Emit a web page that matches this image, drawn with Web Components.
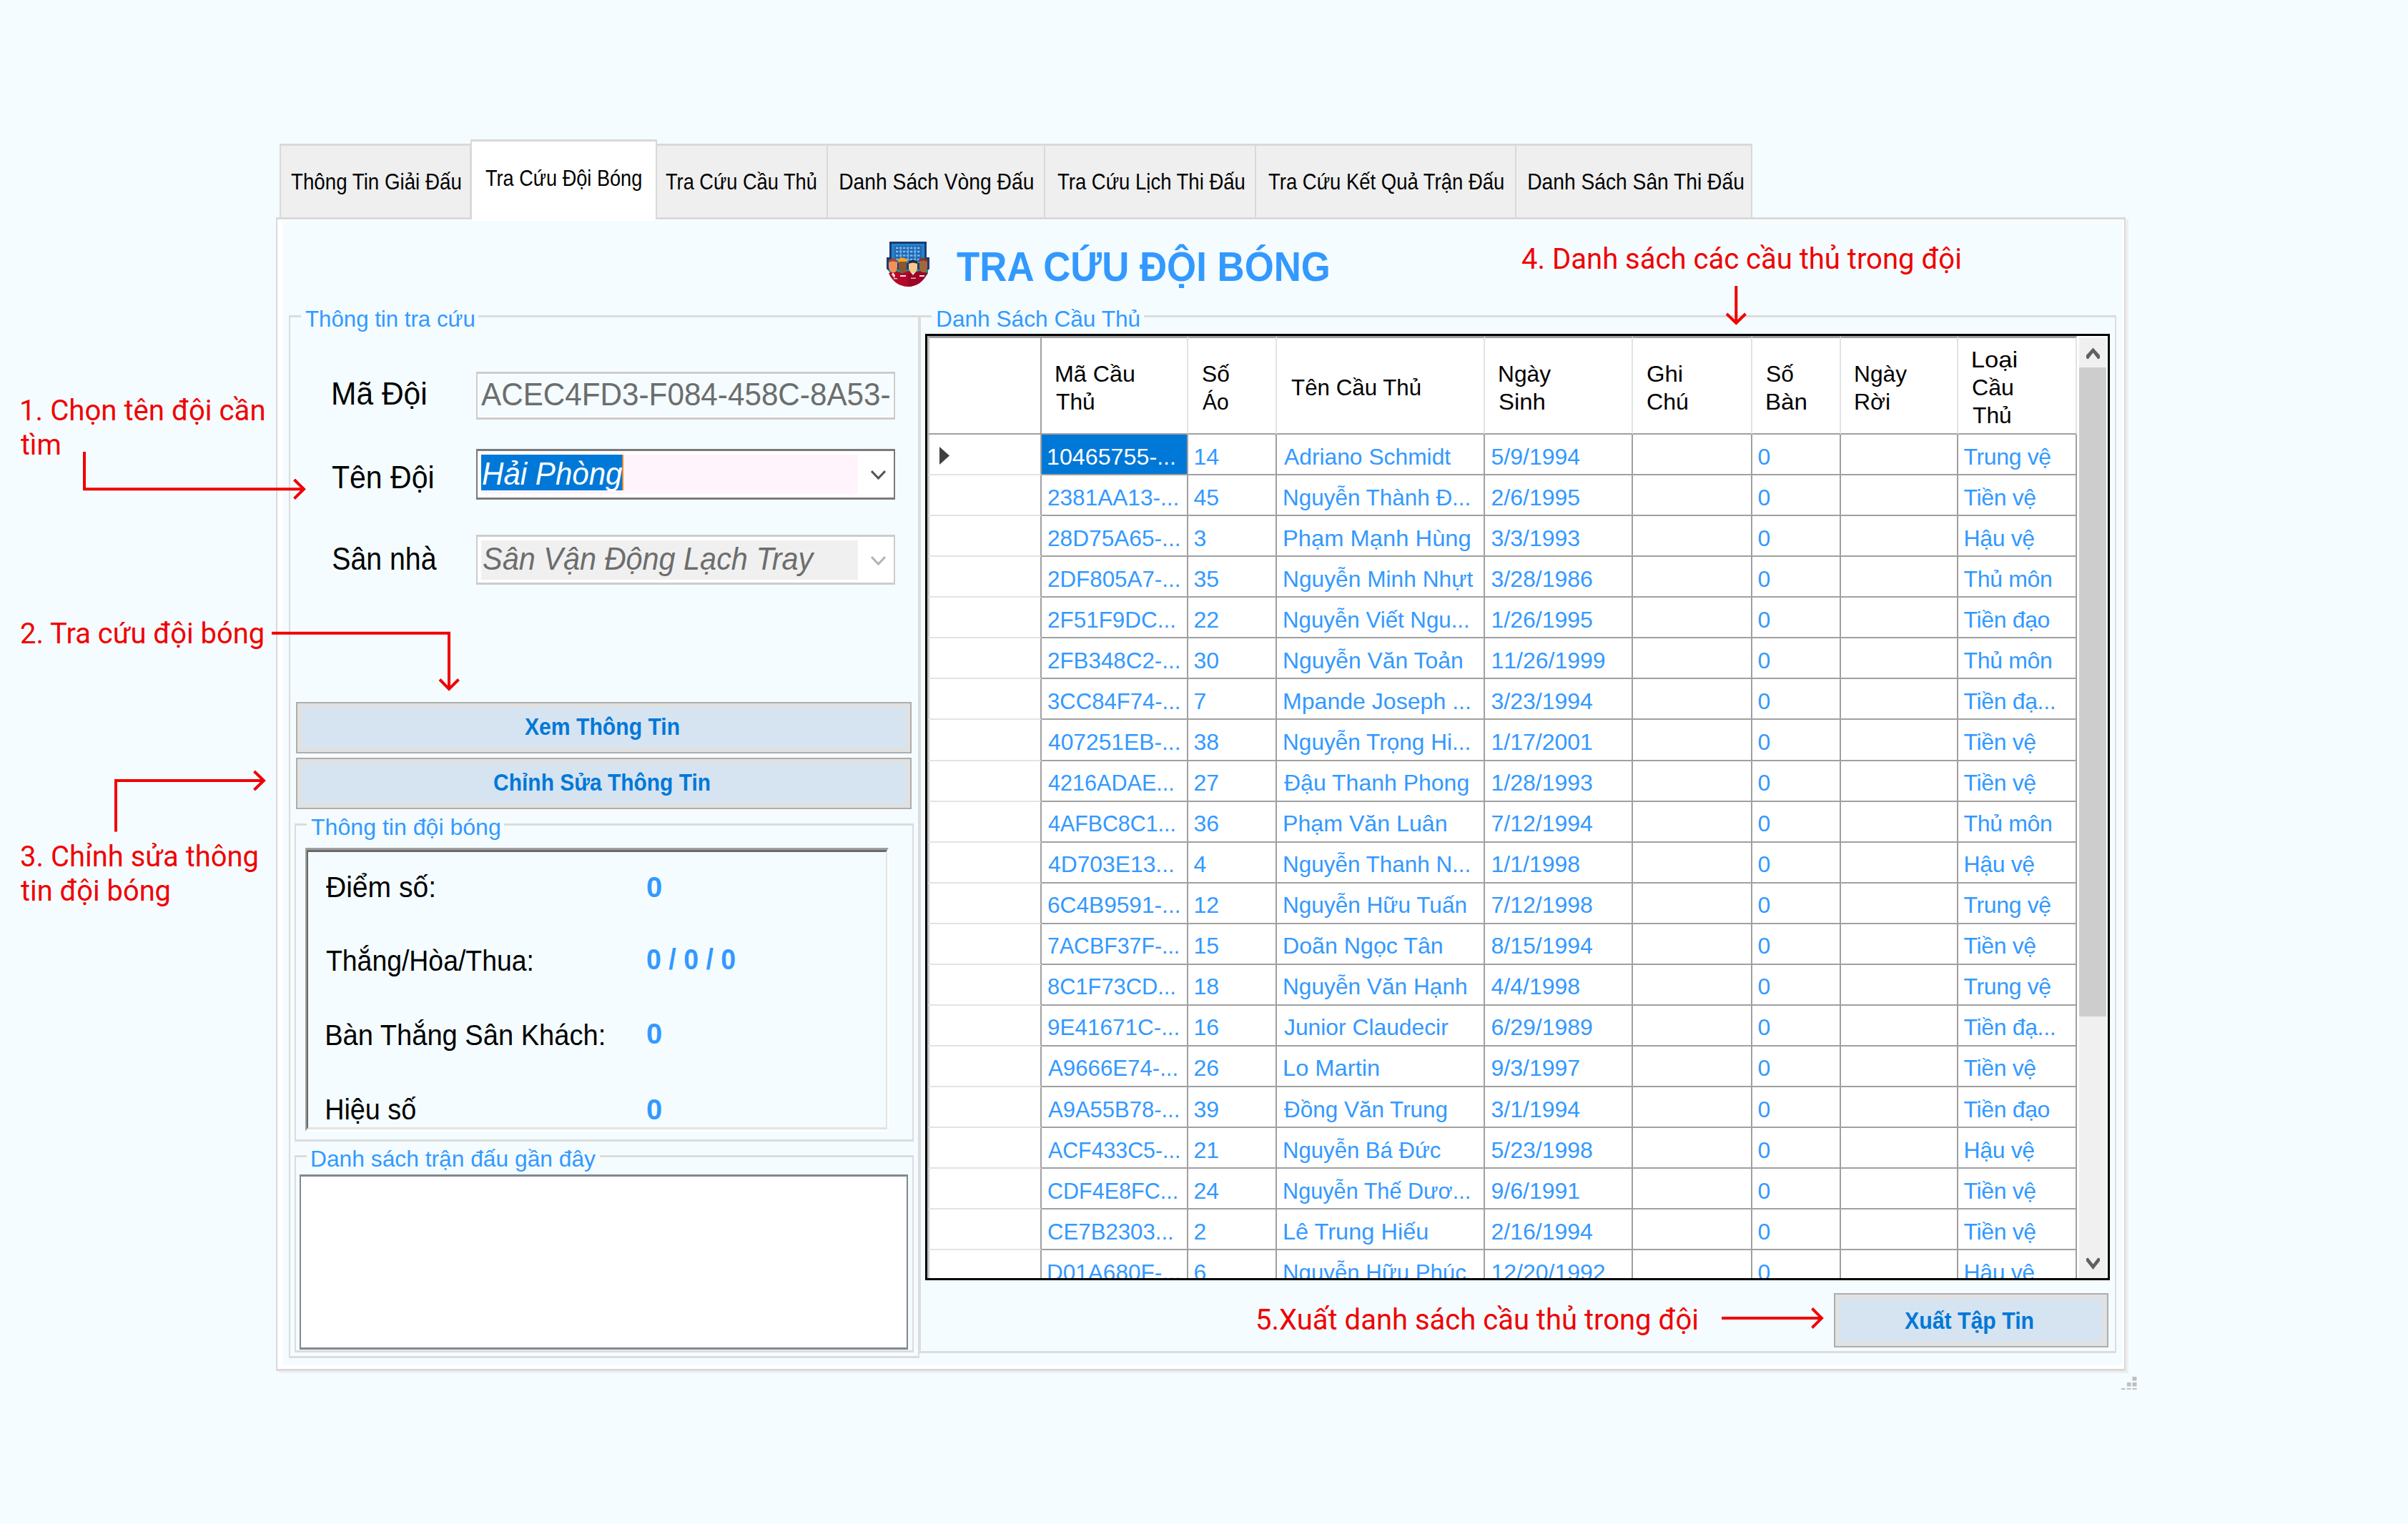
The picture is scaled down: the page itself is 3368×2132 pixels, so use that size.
<!DOCTYPE html>
<html lang="vi">
<head>
<meta charset="utf-8">
<title>Tra Cứu Đội Bóng</title>
<style>
html,body{margin:0;padding:0}
body{width:3368px;height:2132px;background:#f4fcff;overflow:hidden;font-family:"Liberation Sans",Arial,sans-serif;color:#000}
</style>
</head>
<body>
<team-lookup></team-lookup>
<script>
const define = (name, html, setup) => {
  const t = document.createElement('template');
  t.innerHTML = html;
  customElements.define(name, class extends HTMLElement {
    constructor() {
      super();
      this.attachShadow({mode: 'open'}).append(t.content.cloneNode(true));
    }
    connectedCallback() { if (setup) setup(this, this.shadowRoot); }
  });
};
const ctx = document.createElement('canvas').getContext('2d');

/* One line of text whose ink spans exactly `ink` pixels at font size `size`. */
define('fit-text', `<style>
:host{display:block;flex:none;white-space:nowrap}
span{display:inline-block;transform-origin:0 0;line-height:1;vertical-align:top}
</style><span><slot></slot></span>`, (el, root) => {
  const size = +el.getAttribute('size'), ink = +el.getAttribute('ink');
  el.style.fontSize = size + 'px';
  el.style.height = size + 'px';
  el.style.width = ink + 'px';
  const cs = getComputedStyle(el);
  ctx.font = `${cs.fontStyle} ${cs.fontWeight} ${size}px ${cs.fontFamily}`;
  const m = ctx.measureText(el.textContent);
  const s = ink / (m.actualBoundingBoxLeft + m.actualBoundingBoxRight);
  root.querySelector('span').style.transform = `scaleX(${s}) translateX(${m.actualBoundingBoxLeft}px)`;
});

define('tab-item', `<style>
:host{display:block;box-sizing:border-box;flex:none;width:var(--w);height:103px;margin-top:6px;padding:34.5px 0 0 var(--pad);background:#efefef;border-top:3px solid #d9d9d9;border-right:2px solid #d9d9d9}
:host([first]){border-left:2px solid #d9d9d9}
:host([active]){height:112px;margin-top:0;padding-top:35.5px;background:#fff;border-left:2px solid #d9d9d9;position:relative;z-index:1}
</style><slot></slot>`);

define('tab-strip', `<style>
:host{display:flex;height:109px;padding-left:5px;align-items:flex-start}
</style>
<tab-item first style="--w:268px;--pad:14px"><fit-text size="31.5" ink="238">Thông Tin Giải Đấu</fit-text></tab-item>
<tab-item active style="--w:261px;--pad:19px;margin-left:-1px"><fit-text size="31.5" ink="218">Tra Cứu Đội Bóng</fit-text></tab-item>
<tab-item style="--w:239px;--pad:12px"><fit-text size="31.5" ink="211">Tra Cứu Cầu Thủ</fit-text></tab-item>
<tab-item style="--w:304px;--pad:17px"><fit-text size="31.5" ink="270">Danh Sách Vòng Đấu</fit-text></tab-item>
<tab-item style="--w:295px;--pad:16.5px"><fit-text size="31.5" ink="262">Tra Cứu Lịch Thi Đấu</fit-text></tab-item>
<tab-item style="--w:364px;--pad:17px"><fit-text size="31.5" ink="329.5">Tra Cứu Kết Quả Trận Đấu</fit-text></tab-item>
<tab-item style="--w:330px;--pad:17px"><fit-text size="31.5" ink="301">Danh Sách Sân Thi Đấu</fit-text></tab-item>`);

define('group-box', `<style>
:host{display:flex;flex-direction:column;box-sizing:border-box;flex:none;position:relative;border:solid #dcdcdc;border-width:3px 2px}
.legend{position:absolute;left:15px;top:-14px;padding:0 6px;background:#f4fcff;color:#39f}
</style><div class="legend"><slot name="legend"></slot></div><slot></slot>`);

define('push-button', `<style>
:host{display:flex;justify-content:center;box-sizing:border-box;flex:none;border:2px solid #adadad;background:#d6e4f2;color:#0078d7;font-weight:bold;box-shadow:inset 0 0 0 6px #e1e1e1}
::slotted(*){margin-right:6px}
</style><slot></slot>`);

define('form-row', `<style>
:host{display:grid;grid-template-columns:202px 586px;padding-left:58px;flex:none;align-items:start}
</style><slot name="label"></slot><slot></slot>`);

define('text-box', `<style>
:host{display:block;box-sizing:border-box;height:67px;border:solid #ccc;border-width:3px 2px;background:#f4fcff;box-shadow:inset 0 0 0 2px #fff;padding:7px 0 0 5px;color:#6d6d6d}
</style><slot></slot>`);

define('combo-box', `<style>
:host{display:flex;box-sizing:border-box;height:71px;border:solid var(--line);border-width:3px 2px;background:#fff;font-style:italic;padding:5px 0 0 5px}
.field{width:527px;height:55px;background:var(--fill)}
svg{display:block;margin:21px 0 0 18px}
</style><div class="field"><slot></slot></div>
<svg width="21" height="15" viewBox="0 0 21 15"><path d="M1 2L10.5 12L20 2" fill="none" stroke="var(--arrow)" stroke-width="3"/></svg>`);

define('team-badge', `<style>:host{display:block;width:60px;height:63px;flex:none}svg{display:block}</style>
<svg width="60" height="63" viewBox="0 0 60 63">
<path d="M4 0H56V22H60V38L54 44H6L0 38V22H4Z" fill="#1d3a7a"/>
<path d="M7 3H53V30H7Z" fill="#1f86c6"/><path d="M11 6H49V28H11Z" fill="#2b62ae"/>
<g stroke="#6cc3f5" stroke-width="2.4"><path d="M13 9H47M13 14H47M13 19.5H47M13 25H47" stroke-dasharray="3.4 1.6"/><path d="M20 7V27M30 7V27M40 7V27" stroke="#58aee8" stroke-width="1.4"/></g>
<path d="M2 39H58V45L52 50H8Z" fill="#159b7c"/>
<path d="M3 44L12 41L22 44L30 41L39 43L48 41L57 44C53 55 42 63 30 63C18 63 7 55 3 44Z" fill="#b3082a"/>
<path d="M30 44V63C42 63 53 55 57 44L48 41L39 43Z" fill="#9c0526"/>
<path d="M3 27Q9 22 15 27V36Q15 40 12 43H7Q3 39 3 35Z" fill="#f2915a"/><path d="M3 29V26Q9 21 15 26V29Q9 26 3 29Z" fill="#a54a28"/>
<path d="M17 27H28V37Q28 41 25 43H20Q17 40 17 37Z" fill="#8b5534"/><path d="M16 28V25Q22 20 29 25V28Z" fill="#f3a51c"/>
<path d="M31 28H43V37Q43 41 39 44H35Q31 40 31 37Z" fill="#f6c88b"/><path d="M31 31V28Q37 23 43 28V31Q37 28 31 31Z" fill="#232638"/>
<path d="M46 25H57V36Q57 40 54 43H49Q46 40 46 36Z" fill="#a4653f"/><path d="M45 28V25Q51 20 57 25V28Q51 25 45 28Z" fill="#7c3a25"/>
<g fill="#fff"><path d="M9 43L12 47L11 51L7 46ZM19 47H27V49H19ZM33 42L37 47L41 42L38 44H36ZM46 47H53V49H46Z" opacity=".9"/><path d="M10 51H15V52.5H10ZM34 50.500H41V52H34Z" opacity=".7"/></g>
</svg>`);

define('stat-panel', `<style>
:host{display:block;box-sizing:border-box;flex:none;width:816px;height:397px;border:solid;border-width:3px 2px;border-color:#a0a0a0 #fff #fff #a0a0a0}
.in{box-sizing:border-box;height:100%;border:solid;border-width:3px 2px;border-color:#696969 #e3e3e3 #e3e3e3 #696969;padding:28.5px 0 0 25px}
.row{display:grid;grid-template-columns:449px 1fr;align-items:start;height:103.8px}
.v{color:#39f;font-weight:bold}
</style><div class="in">
<div class="row"><fit-text size="40" ink="151">Điểm số:</fit-text><fit-text class="v" size="40" ink="20">0</fit-text></div>
<div class="row"><fit-text size="40" ink="288">Thắng/Hòa/Thua:</fit-text><fit-text class="v" style="margin-top:-2px" size="40" ink="123">0 / 0 / 0</fit-text></div>
<div class="row"><fit-text style="margin-left:1px" size="40" ink="388">Bàn Thắng Sân Khách:</fit-text><fit-text class="v" style="margin-top:-2px" size="40" ink="20">0</fit-text></div>
<div class="row"><fit-text style="margin-left:1px" size="40" ink="125">Hiệu số</fit-text><fit-text class="v" size="40" ink="20">0</fit-text></div>
</div>`);

const players = [
['10465755-...',765,'14','Adriano Schmidt',945,'5/9/1994','Trung vệ'],
['2381AA13-...',767,'45','Nguyễn Thành Đ...',957,'2/6/1995','Tiền vệ'],
['28D75A65-...',768,'3','Phạm Mạnh Hùng',957.4,'3/3/1993','Hậu vệ'],
['2DF805A7-...',768,'35','Nguyễn Minh Nhựt',959.5,'3/28/1986','Thủ môn'],
['2F51F9DC...',765,'22','Nguyễn Viết Ngu...',956,'1/26/1995','Tiền đạo'],
['2FB348C2-...',768,'30','Nguyễn Văn Toản',952.5,'11/26/1999','Thủ môn'],
['3CC84F74-...',768,'7','Mpande Joseph ...',957,'3/23/1994','Tiền đạ...'],
['407251EB-...',768,'38','Nguyễn Trọng Hi...',957,'1/17/2001','Tiền vệ'],
['4216ADAE...',764,'27','Đậu Thanh Phong',956.5,'1/28/1993','Tiền vệ'],
['4AFBC8C1...',765,'36','Phạm Văn Luân',942,'7/12/1994','Thủ môn'],
['4D703E13...',764,'4','Nguyễn Thanh N...',957,'1/1/1998','Hậu vệ'],
['6C4B9591-...',768,'12','Nguyễn Hữu Tuấn',955,'7/12/1998','Trung vệ'],
['7ACBF37F-...',767.5,'15','Doãn Ngọc Tân',939.5,'8/15/1994','Tiền vệ'],
['8C1F73CD...',765,'18','Nguyễn Văn Hạnh',955,'4/4/1998','Trung vệ'],
['9E41671C-...',767.5,'16','Junior Claudecir',943.5,'6/29/1989','Tiền đạ...'],
['A9666E74-...',766.5,'26','Lo Martin',898,'9/3/1997','Tiền vệ'],
['A9A55B78-...',767.5,'39','Đồng Văn Trung',942.5,'3/1/1994','Tiền đạo'],
['ACF433C5-...',768,'21','Nguyễn Bá Đức',938.5,'5/23/1998','Hậu vệ'],
['CDF4E8FC...',766.5,'24','Nguyễn Thế Dươ...',957,'9/6/1991','Tiền vệ'],
['CE7B2303...',763.5,'2','Lê Trung Hiếu',930,'2/16/1994','Tiền vệ'],
['D01A680F-...',768,'6','Nguyễn Hữu Phúc',955,'12/20/1992','Hậu vệ'],
];

define('scroll-bar', `<style>
:host{display:flex;flex-direction:column;flex:none;width:38px;margin:2px 0 0 3px;background:#f0f0f0}
svg{display:block;flex:none}
.thumb{height:908px;background:#cdcdcd}
.down{margin-top:auto}
</style>
<svg width="38" height="42" viewBox="0 0 38 42"><path d="M10 29V25L19.500 14.500L29 25V29L26.500 30.500L19.500 21.500L12.500 30.500Z" fill="#606060"/></svg>
<div class="thumb"></div>
<svg class="down" width="38" height="42" viewBox="0 0 38 42"><path d="M10 18V14.500L12.500 13.500L19.500 22.500L26.500 13.500L29 14.500V18L19.500 30Z" fill="#606060"/></svg>`);

define('player-table', `<style>
:host{display:flex;box-sizing:border-box;flex:none;width:1657px;height:1324px;border:3px solid #000;background:#fff;overflow:hidden}
.rows{width:1608px;flex:none}
.r{display:grid;grid-template-columns:160px 205px 124px 291px 207px 167px 124px 164px 166px;height:57.07px;color:#39f;font-size:32px;line-height:32px;white-space:nowrap}
.r>div{border-right:2px solid #a0a0a0;border-bottom:2px solid #a0a0a0;padding:14.5px 0 0 7.5px}
.r>.mark{border-bottom-color:#e3e3e3;border-left:3px solid #c4c4c4;padding:17px 0 0 14px}
.r>.id{padding-left:9px}.r>.name{padding-left:10px}
.r>.date{font-kerning:none;padding-left:8.5px}
.r>.kind{letter-spacing:-.35px}
.r:nth-child(2)>.id{background:#0078d7;color:#fff}
.h{color:#000;height:138px;box-sizing:border-box}
.r.h>div{display:flex;flex-direction:column;justify-content:center;gap:7px;border-top:3px solid #a0a0a0;border-right-color:#e3e3e3;padding:5px 0 0 20px}
.r.h>.mark{border-bottom-color:#a0a0a0;border-right-color:#a0a0a0}
svg{display:block}
</style><div class="rows"></div><scroll-bar></scroll-bar>`, (el, root) => {
  const ft = (t, ink, size = 32) => `<fit-text size="${size}" ink="${ink}">${t}</fit-text>`;
  const heads = [[['Mã Cầu',109],['Thủ',53]],[['Số',38],['Áo',36]],[['Tên Cầu Thủ',181]],[['Ngày',72],['Sinh',63]],[['Ghi',48],['Chú',56]],[['Số',38],['Bàn',55]],[['Ngày',72],['Rời',47]],[['Loại',61],['Cầu',56],['Thủ',53]]];
  let h = '<div class="r h"><div class="mark"></div>' + heads.map(c => '<div>' + c.map(l => ft(l[0], l[1])).join('') + '</div>').join('') + '</div>';
  players.forEach((p, i) => {
    const arrow = i ? '' : '<svg width="14" height="25" viewBox="0 0 14 25"><path d="M0 0L14 12.500L0 25Z" fill="#404040"/></svg>';
    h += `<div class="r"><div class="mark">${arrow}</div><div class="id">${ft(p[0], ((p[1] - 683) * 2.148).toFixed(1))}</div><div>${p[2]}</div><div class="name">${ft(p[3], ((p[4] - 836.4) * 2.148).toFixed(1))}</div><div class="date">${p[5]}</div><div></div><div>0</div><div></div><div class="kind">${p[6]}</div></div>`;
  });
  root.querySelector('.rows').innerHTML = h;
});

/* Red callouts pinned over the window. */
define('callout-layer', `<style>
:host{position:absolute;left:0;top:0;width:3368px;height:2132px;color:#f00000;font-family:Roboto,sans-serif;z-index:3}
.n{position:absolute;display:flex;flex-direction:column;gap:7px}
svg{position:absolute;left:0;top:0}
</style>
<svg width="3368" height="2132" viewBox="0 0 3368 2132" fill="none" stroke="#f00000" stroke-width="4">
<path d="M118 632V684.300H424M411.500 671L425 684.300L411.500 697.500"/>
<path d="M380 885.700H628V964M615 950.500L628 964L641.500 950.500"/>
<path d="M162 1163.500V1092H368M355.500 1079L369 1092L355.500 1105"/>
<path d="M2428.300 400V452M2415 439L2428.300 452L2441.500 439"/>
<path d="M2408 1844H2547M2534.500 1830.500L2548 1844L2534.500 1857.500"/>
</svg>
<div class="n" style="left:30px;top:553.5px"><fit-text size="41" ink="339">1. Chọn tên đội cần</fit-text><fit-text style="margin-left:-1px" size="41" ink="55">tìm</fit-text></div>
<div class="n" style="left:29px;top:865.5px"><fit-text size="41" ink="340">2. Tra cứu đội bóng</fit-text></div>
<div class="n" style="left:29px;top:1177.5px"><fit-text size="41" ink="331">3. Chỉnh sửa thông</fit-text><fit-text size="41" ink="208">tin đội bóng</fit-text></div>
<div class="n" style="left:2129px;top:341.5px"><fit-text size="41" ink="613">4. Danh sách các cầu thủ trong đội</fit-text></div>
<div class="n" style="left:1759px;top:1825.5px"><fit-text size="41" ink="615">5.Xuất danh sách cầu thủ trong đội</fit-text></div>`);

define('size-grip', `<style>:host{position:absolute;left:2967px;top:1926px}svg{display:block}</style>
<svg width="22" height="18" viewBox="0 0 22 18" fill="#bfbfbf"><path d="M15.500 0H21.500V5.500H15.500ZM8 8H13.500V13.500H8ZM15.500 8H21.500V13.500H15.500ZM0 16H5.500V18H0ZM8 16H13.500V18H8ZM15.500 16H21.500V18H15.500Z"/></svg>`);

define('team-lookup', `<style>
:host{display:block;box-sizing:border-box;width:3368px;height:2132px;padding:195px 0 0 386px;position:relative}
.panel{box-sizing:border-box;width:2587px;height:1614px;border:solid #d9d9d9;border-width:3px 2px;background:#fff;padding:2px 3px 5px 7px;box-shadow:4px 3px 0 #efeff0}
.page{height:1601px;background:#f4fcff}
header{display:flex;box-sizing:border-box;height:132px;padding:29px 0 0 845px;align-items:flex-start}
.title{color:#39f;font-weight:bold;margin:8px 0 0 38px}
.cols{display:flex;padding-left:9px;align-items:flex-start}
.left{width:882px;height:1459px}
.right{width:1674px;height:1452px}
.form{height:538px;box-sizing:border-box;padding-top:76px}
.sel{display:block;background:#0078d7;color:#fff;width:199px;height:50px;box-sizing:border-box;padding:4.500px 0 0 2px;border-right:2px solid #e08a2c}
.list{flex:none;width:851px;height:245px;box-sizing:border-box;border:solid #828790;border-width:3px 2px;background:#fff;margin:23.500px 0 0 5px}
</style>
<tab-strip></tab-strip>
<div class="panel"><div class="page">
<header><team-badge></team-badge><fit-text class="title" size="56.7" ink="522">TRA CỨU ĐỘI BÓNG</fit-text></header>
<div class="cols">
<group-box class="left"><fit-text slot="legend" size="32" ink="236">Thông tin tra cứu</fit-text>
<div class="form">
<form-row><fit-text slot="label" style="margin:9px 0 0 2px" size="44" ink="129">Mã Đội</fit-text><text-box><fit-text size="44" ink="571">ACEC4FD3-F084-458C-8A53-</fit-text></text-box></form-row>
<form-row style="margin-top:41px"><fit-text slot="label" style="margin-top:18px" size="44" ink="141">Tên Đội</fit-text><combo-box style="--line:#7a7a7a;--fill:#fff4fb;--arrow:#555"><div class="sel"><fit-text size="44" ink="196">Hải Phòng</fit-text></div></combo-box></form-row>
<form-row style="margin-top:49px"><fit-text slot="label" style="margin:12px 0 0 1.5px" size="44" ink="145">Sân nhà</fit-text><combo-box style="--line:#ccc;--fill:#f0f0f0;--arrow:#b4b4b4;height:70px"><fit-text style="margin:3.5px 0 0 3px;color:#6d6d6d" size="44" ink="464">Sân Vận Động Lạch Tray</fit-text></combo-box></form-row>
</div>
<push-button style="width:861px;height:72px;margin-left:8px;padding-top:16px"><fit-text size="33" ink="216">Xem Thông Tin</fit-text></push-button>
<push-button style="width:861px;height:72px;margin:6px 0 0 8px;padding-top:16px"><fit-text size="33" ink="302">Chỉnh Sửa Thông Tin</fit-text></push-button>
<group-box style="width:866px;height:445px;margin:20px 0 0 6px"><fit-text slot="legend" size="32" ink="264">Thông tin đội bóng</fit-text>
<stat-panel style="margin:31px 0 0 13px"></stat-panel></group-box>
<group-box style="width:866px;height:276px;margin:19px 0 0 6px"><fit-text slot="legend" size="32" ink="397" style="margin-left:1px">Danh sách trận đấu gần đây</fit-text><div class="list"></div></group-box>
</group-box>
<group-box class="right"><fit-text slot="legend" size="32" ink="283" style="margin-left:2px">Danh Sách Cầu Thủ</fit-text>
<player-table style="margin:23px 0 0 6px"></player-table>
<push-button style="width:384px;height:76px;margin:18px 0 0 1277px;padding-top:20px"><fit-text size="33" ink="180">Xuất Tập Tin</fit-text></push-button>
</group-box>
</div>
</div></div>
<size-grip></size-grip>
<callout-layer></callout-layer>`);
</script>
</body>
</html>
